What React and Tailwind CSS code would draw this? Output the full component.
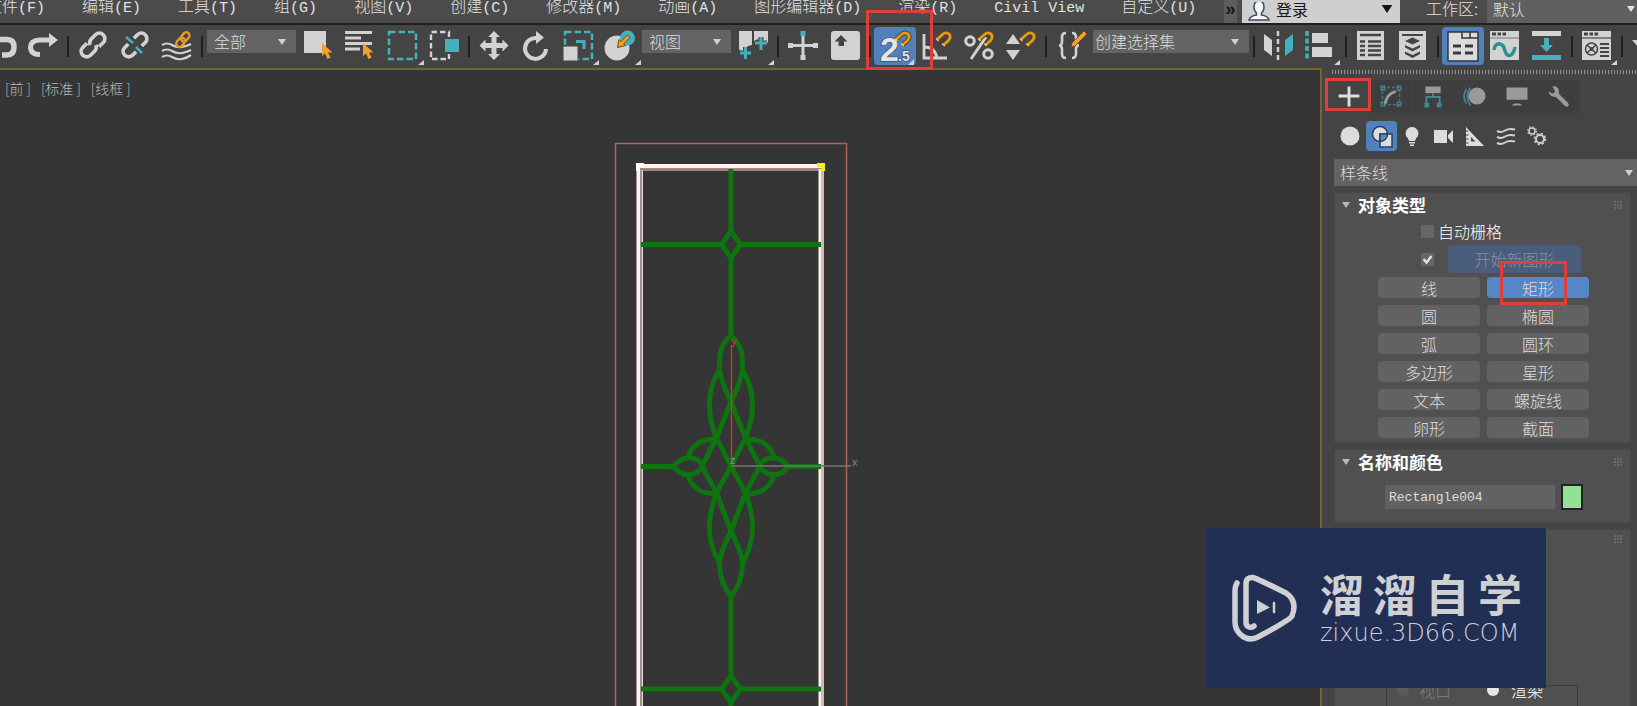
import { clsx } from 'clsx'

const LIGHT = '#d2d2d2'
const TEAL = '#43b0bb'
const ORANGE = '#f2a02a'

const menus = [
  ['文件', '(F)'],
  ['编辑', '(E)'],
  ['工具', '(T)'],
  ['组', '(G)'],
  ['视图', '(V)'],
  ['创建', '(C)'],
  ['修改器', '(M)'],
  ['动画', '(A)'],
  ['图形编辑器', '(D)'],
  ['渲染', '(R)'],
  ['', 'Civil View'],
  ['自定义', '(U)'],
]

const shapes = ['线', '矩形', '圆', '椭圆', '弧', '圆环', '多边形', '星形', '文本', '螺旋线', '卵形', '截面']

const Cursor = ({ x, y }) => (
  <path
    transform={`translate(${x} ${y})`}
    d="M0 0 L0 13 L3 10.5 L5.500 16 L8.500 14.500 L6 9.500 L10.500 9.500 Z"
    fill={ORANGE}
  />
)

const Magnet = ({ x, y }) => (
  <g transform={`translate(${x} ${y})`} fill="none" strokeLinecap="butt">
    <path d="M1 8.500 L6.500 3.500 Q10 0.500 13 3 Q15.500 6 12.500 9.500 L7.500 14" stroke="#5a4520" strokeWidth="4.800" />
    <path d="M1 8.500 L6.500 3.500 Q10 0.500 13 3 Q15.500 6 12.500 9.500 L7.500 14" stroke="#e39a22" strokeWidth="2.800" />
    <path d="M0 7.500 L2.500 10 M6.200 12.500 L8.700 15" stroke="#f7c766" strokeWidth="1.500" />
  </g>
)

// toolbar glyphs, drawn on a 42x38 cell
const glyphs = {
  undo: <path d="M14 12.500 H27 Q34 12.500 34 20 Q34 28 27 28 H22" fill="none" stroke={LIGHT} strokeWidth="5.500" />,
  redo: (
    <g>
      <path d="M29 13 H17 Q8.500 14 8.500 20 Q8.500 27.500 18 27.500" fill="none" stroke={LIGHT} strokeWidth="5" />
      <path d="M27 6 L36 13 L27 20 Z" fill={LIGHT} />
    </g>
  ),
  link: (
    <g transform="rotate(-45 21 18)" fill="none" stroke={LIGHT} strokeWidth="3.600">
      <path d="M18 12.500 H12 a5.500 5.500 0 0 0 0 11 H18 a5.500 5.500 0 0 0 5 -3.500" />
      <path d="M24 23.500 H30 a5.500 5.500 0 0 0 0 -11 H24 a5.500 5.500 0 0 0 -5 3.500" />
    </g>
  ),
  unlink: (
    <g>
      <g transform="rotate(-45 21 18)" fill="none" stroke={LIGHT} strokeWidth="3.600">
        <path d="M17 12.500 H12 a5.500 5.500 0 0 0 0 11 H17" />
        <path d="M25 23.500 H30 a5.500 5.500 0 0 0 0 -11 H25" />
      </g>
      <path d="M12 10 L19 16 M22 20 L28 26" stroke={TEAL} strokeWidth="2.500" />
    </g>
  ),
  bind: (
    <g fill="none">
      <path
        d="M6 18 Q11 15 16 18 T26 20 T35 17 M6 24 Q11 21 16 24 T26 26 T35 23 M6 30 Q11 27 16 30 T26 32 T35 28"
        stroke={LIGHT}
        strokeWidth="2.200"
      />
      <g transform="rotate(-50 27 12)" stroke="#e09a28" strokeWidth="2.400">
        <rect x="18" y="9" width="10" height="6.500" rx="3.200" />
        <rect x="25" y="9" width="10" height="6.500" rx="3.200" />
      </g>
    </g>
  ),
  selectObject: (
    <g>
      <path d="M7 4 H29 V26 H7 Z" fill={LIGHT} />
      <Cursor x={25} y={16} />
    </g>
  ),
  selectName: (
    <g>
      <path d="M6 5.500 H33 M6 11 H22 M6 16.500 H33 M6 22 H21" stroke={LIGHT} strokeWidth="2.800" />
      <Cursor x={24} y={16} />
    </g>
  ),
  region: (
    <g>
      <rect x="8" y="5" width="27" height="27" fill="none" stroke={TEAL} strokeWidth="2.500" strokeDasharray="6.500 3" />
      <path d="M43 33 V38 H37 Z" fill={LIGHT} />
    </g>
  ),
  crossing: (
    <g>
      <path d="M26 10 V5 H8 V32 H26 V27" fill="none" stroke={LIGHT} strokeWidth="2.400" strokeDasharray="5.500 3" />
      <rect x="22" y="12" width="14" height="13" fill={TEAL} />
    </g>
  ),
  move: (
    <path
      d="M21 4 L27 10 H23.500 V16 H29.500 V12.500 L35.500 18.500 L29.500 24.500 V21 H23.500 V27 H27 L21 33 L15 27 H18.500 V21 H12.500 V24.500 L6.500 18.500 L12.500 12.500 V16 H18.500 V10 H15 Z"
      fill={LIGHT}
    />
  ),
  rotate: (
    <g>
      <path d="M22 11 A10.500 10.500 0 1 0 31 22" fill="none" stroke={LIGHT} strokeWidth="4" />
      <path d="M21 4 L29 10.500 L21 17 Z" fill={LIGHT} />
    </g>
  ),
  scale: (
    <g>
      <rect x="8" y="5" width="27" height="27" fill="none" stroke={TEAL} strokeWidth="2.500" strokeDasharray="6.500 3" />
      <path d="M19 14.500 H27 V22" fill="none" stroke={TEAL} strokeWidth="3" />
      <rect x="6" y="19" width="15" height="15" fill={LIGHT} stroke="#444" strokeWidth="1" />
      <path d="M42 33 V38 H36 Z" fill={LIGHT} />
    </g>
  ),
  place: (
    <g>
      <circle cx="18" cy="21" r="12.500" fill={LIGHT} />
      <circle cx="28.500" cy="11" r="7.500" fill={TEAL} />
      <path d="M20 12.500 L18.500 20.500 L26.500 18.500 L24.500 17 L31 10.500 L28.500 8 L22 14.500 Z" fill={ORANGE} stroke="#6b4a18" strokeWidth="1" />
      <path d="M42 33 V38 H36 Z" fill={LIGHT} />
    </g>
  ),
  pivot: (
    <g>
      <path d="M7 4 H20 V18 L16 19 L12 23 V27 L7 22 Z M22 4 H36 V15 L32 19 L26 12 L22 14 Z" fill={LIGHT} />
      <path d="M8 26 H19 M13.500 20 V32 M23 16 H35 M29 10 V23" stroke="#444" strokeWidth="5" />
      <path d="M8 26 H19 M13.500 20 V32 M23 16 H35 M29 10 V23" stroke={TEAL} strokeWidth="3" />
      <path d="M42 33 V38 H36 Z" fill={LIGHT} />
    </g>
  ),
  manipulate: (
    <g fill={LIGHT}>
      <path d="M19.500 9 H22.500 V17 H31 V20 H22.500 V28 H19.500 V20 H11 V17 H19.500 Z" />
      <path d="M6 16 H11 V21 H6 Z M31 16 H36 V21 H31 Z M18.500 28 H23.500 V33 H18.500 Z" />
      <path d="M18.500 4 H23.500 V9 H18.500 Z" fill={TEAL} />
    </g>
  ),
  keyboard: (
    <g>
      <rect x="7" y="4" width="29" height="29" rx="3" fill={LIGHT} />
      <path d="M17 8 L23.500 14.500 H20 V19 H14.500 V14.500 H10.500 Z" fill="#444" />
    </g>
  ),
  snap: (
    <g>
      <text x="6" y="34" fontSize="34" fontWeight="700" fill="#e4e4e4" stroke="#2f3a4c" strokeWidth="1" paintOrder="stroke">
        2
      </text>
      <text x="24" y="34" fontSize="14" fontWeight="700" fill="#e4e4e4" stroke="#2f3a4c" strokeWidth="1" paintOrder="stroke">
        .5
      </text>
      <Magnet x={21} y={4} />
      <path d="M40 32 V38 H34 Z" fill={LIGHT} />
    </g>
  ),
  angle: (
    <g>
      <path d="M8 7 V31 H31 M8 20 Q19 20 21 31" fill="none" stroke={LIGHT} strokeWidth="2.800" />
      <Magnet x={20} y={4} />
    </g>
  ),
  percent: (
    <g>
      <g fill="none" stroke={LIGHT} strokeWidth="3">
        <circle cx="12" cy="14" r="4.300" />
        <circle cx="30" cy="27" r="4.300" />
        <path d="M28 10 L13 32" />
      </g>
      <Magnet x={20} y={4} />
    </g>
  ),
  spinner: (
    <g>
      <path d="M6 17 L13 7 L20 17 Z M6 23 L13 33 L20 23 Z" fill={LIGHT} />
      <Magnet x={20} y={4} />
    </g>
  ),
  braces: (
    <g>
      <path
        d="M16 6 Q12 6 12 10 V15 Q12 18.500 9 18.500 Q12 18.500 12 22 V27 Q12 31 16 31 M22 6 Q26 6 26 10 V15 Q26 18.500 29 18.500 Q26 18.500 26 22 V27 Q26 31 22 31"
        fill="none"
        stroke={LIGHT}
        strokeWidth="2.600"
      />
      <path d="M34 4 L37 7 L25 19 L21 20 L22 16 Z" fill={ORANGE} stroke="#6b4a18" strokeWidth="0.800" />
    </g>
  ),
  mirror: (
    <g>
      <path d="M6 7 L14 13 V29 L6 23 Z" fill={LIGHT} />
      <path d="M20 4 V34" stroke={LIGHT} strokeWidth="2.500" strokeDasharray="5 3" />
      <path d="M35 7 L27 13 V29 L35 23 Z" fill={TEAL} />
    </g>
  ),
  align: (
    <g>
      <path d="M7 4 V33" stroke={TEAL} strokeWidth="3.500" strokeDasharray="5 2.500" />
      <path d="M12 6 H28 V16 H12 Z M12 20 H32 V30 H12 Z" fill={LIGHT} />
      <path d="M40 33 V38 H34 Z" fill={LIGHT} />
    </g>
  ),
  explorer: (
    <g>
      <path d="M7 4 H34 V33 H7 Z" fill={LIGHT} />
      <path
        d="M10 8 H31 M10 14.500 H15 M18 14.500 H31 M10 19 H15 M18 19 H31 M10 23.500 H15 M18 23.500 H31 M10 28 H15 M18 28 H31"
        stroke="#444"
        strokeWidth="2.300"
      />
    </g>
  ),
  layers: (
    <g>
      <path d="M7 4 H34 V33 H7 Z" fill={LIGHT} />
      <path d="M10 8 H31" stroke="#444" strokeWidth="2" />
      <path
        d="M20.500 10.500 L28 14 L20.500 17.500 L13 14 Z M13 18 L20.500 21.500 L28 18 L28 20.500 L20.500 24.500 L13 20.500 Z M13 24.500 L20.500 28 L28 24.500 V27 L20.500 31 L13 27 Z"
        fill="#444"
      />
    </g>
  ),
  ribbon: (
    <g>
      <path d="M6 5 H36 V34 H6 Z" fill="#dcdcdc" stroke="#30353c" strokeWidth="1.500" />
      <path d="M20 5 V11 H36 M28 5 V11" fill="none" stroke="#30353c" strokeWidth="1.500" />
      <path d="M11 19 H19 M11 26 H19 M23 19 H31 M23 26 H31" stroke="#3a3a3a" strokeWidth="3" />
    </g>
  ),
  curve: (
    <g>
      <path d="M6 4 H35 V33 H6 Z" fill={LIGHT} />
      <path d="M8 7 H12 M13.500 7 H17 M18.500 7 H22" stroke="#444" strokeWidth="3" />
      <path d="M6 11 H35" stroke="#777" strokeWidth="1" />
      <path d="M10 23 Q11 16 16 17 Q20 18 21 24 Q23 30 27 28 Q30 26 31 20" fill="none" stroke="#2f8d97" strokeWidth="3.500" />
    </g>
  ),
  schematic: (
    <g>
      <path d="M6 4 H35 V9 H6 Z" fill={LIGHT} />
      <path d="M6 28 H35 V33 H6 Z M18 11 H23 V18 H27 L20.500 25 L14 18 H18 Z" fill={TEAL} />
    </g>
  ),
  material: (
    <g>
      <path d="M6 4 H35 V33 H6 Z" fill={LIGHT} />
      <path d="M8 7 H12 M13.500 7 H17 M18.500 7 H22" stroke="#444" strokeWidth="3" />
      <path d="M6 11 H35" stroke="#666" strokeWidth="1.500" />
      <circle cx="15.500" cy="22" r="6" fill="none" stroke="#444" strokeWidth="1.500" />
      <path d="M11 18 L20 26 M20 18 L11 26" stroke="#444" strokeWidth="1.500" />
      <circle cx="15.500" cy="22" r="2" fill="#444" />
      <path d="M24 17 H33 M24 21 H33 M24 25 H33 M24 29 H33" stroke="#444" strokeWidth="1.800" />
      <path d="M41 33 V38 H35 Z" fill={LIGHT} />
    </g>
  ),
  teapot: <path d="M6 13 L14 13 L14 22 Z" fill={LIGHT} />,
}

const tabs = [
  { name: '创建', icon: <path d="M10 16 H32 M21 6 V27" stroke="#e0e0e0" strokeWidth="3" /> },
  {
    name: '修改',
    icon: (
      <g fill="none">
        <path d="M12 7 H30 V25 H12 Z" stroke="#3d7f85" strokeWidth="1.500" strokeDasharray="3 2" />
        <path d="M10.500 5.500 h4 v4 h-4 Z M27.500 5.500 h4 v4 h-4 Z M10.500 22.500 h4 v4 h-4 Z M27.500 22.500 h4 v4 h-4 Z" stroke="#3d9199" strokeWidth="1.200" />
        <path d="M15 24 Q16 14 26 11" stroke="#9a9a9a" strokeWidth="3" />
      </g>
    ),
  },
  {
    name: '层次',
    icon: (
      <g>
        <path d="M13 6 H29 V13 H13 Z" fill="#9a9a9a" />
        <path d="M21 13 V17 M14 24 V17 H28 V24" fill="none" stroke="#3d8a92" strokeWidth="2" />
        <path d="M12 23 H17 V28 H12 Z M25 23 H30 V28 H25 Z" fill="#3d8a92" />
      </g>
    ),
  },
  {
    name: '运动',
    icon: (
      <g>
        <path d="M12 9 Q7 16 12 24 M16 7 Q10 16 16 26" fill="none" stroke="#3d8a92" strokeWidth="1.800" />
        <circle cx="23" cy="16" r="9" fill="#9a9a9a" />
      </g>
    ),
  },
  {
    name: '显示',
    icon: <path d="M10 7 H32 V20 H10 Z M15 26 Q21 21 27 26 Z" fill="#9a9a9a" />,
  },
  {
    name: '实用程序',
    icon: (
      <g>
        <path d="M18 14 L29 25" stroke="#9a9a9a" strokeWidth="4.500" strokeLinecap="round" />
        <path d="M14 6 Q20 5 21 11 Q21 16 17 17 Q11 17 10 11 L14.500 13.500 L17 11 Z" fill="#9a9a9a" />
      </g>
    ),
  },
]

const categories = [
  { name: '几何体', icon: <circle cx="15" cy="15" r="9.500" fill="#dcdcdc" /> },
  {
    name: '图形',
    icon: (
      <g stroke="#27405f" strokeWidth="1.500">
        <circle cx="14" cy="13" r="7.500" fill="#dcdcdc" />
        <path d="M14 13 H26 V26 H14 Z" fill="#dcdcdc" />
        <path d="M14 20 V13 H21.500 A7.500 7.500 0 0 1 14 20.500 Z" fill="#5b8ac6" />
      </g>
    ),
  },
  {
    name: '灯光',
    icon: (
      <g fill="#dcdcdc">
        <path d="M15 6 A6.500 6.500 0 0 1 19 17.500 L18 20 H12 L11 17.500 A6.500 6.500 0 0 1 15 6 Z" />
        <path d="M12 21 H18 V22.500 H12 Z M13 23.500 H17 V25 H13 Z" />
      </g>
    ),
  },
  { name: '摄影机', icon: <path d="M6 9 H19 V22 H6 Z M20 14 L25 9 V22 L20 17 Z" fill="#dcdcdc" /> },
  {
    name: '辅助对象',
    icon: (
      <g>
        <path d="M7 6 L25 25 H7 Z M12 16 V20.500 H16.500 Z" fill="#dcdcdc" fillRule="evenodd" />
        <path d="M7 10 H9.500 M7 14 H9.500 M7 18 H9.500 M7 22 H9.500" stroke="#444" />
      </g>
    ),
  },
  {
    name: '空间扭曲',
    icon: (
      <path
        d="M7 10 Q11 12 15 9.500 T25 8.500 M7 16 Q11 18 15 15.500 T25 14.500 M7 22 Q11 24 15 21.500 T25 20.500"
        fill="none"
        stroke="#cfcfcf"
        strokeWidth="2"
      />
    ),
  },
  {
    name: '系统',
    icon: (
      <g fill="none" stroke="#cfcfcf">
        <circle cx="11" cy="10" r="3" strokeWidth="1.500" />
        <circle cx="11" cy="10" r="4.300" strokeWidth="1.200" strokeDasharray="1.500 1.900" />
        <circle cx="19" cy="18" r="4" strokeWidth="2" />
        <circle cx="19" cy="18" r="5.500" strokeWidth="1.600" strokeDasharray="2.100 2.220" />
      </g>
    ),
  },
]

function Tool({ name, label, active, children }) {
  return (
    <button
      type="button"
      aria-label={label || name}
      className={clsx('relative h-[38px] w-[42px] shrink-0', active && 'rounded bg-[#5180bd]')}
    >
      <svg viewBox="0 0 42 38" className="h-[38px] w-[42px] overflow-visible font-['Liberation_Sans']">
        {glyphs[name]}
      </svg>
      {children}
    </button>
  )
}

function Sep() {
  return (
    <div className="flex h-[38px] w-2 shrink-0 items-center justify-center">
      <span className="h-[21px] w-0.5 bg-[#1e1e1e]" />
    </div>
  )
}

function Arrow({ className }) {
  return (
    <svg viewBox="0 0 8 6" className={clsx('pointer-events-none', className)}>
      <path d="M0 0 H8 L4 6 Z" fill="currentColor" />
    </svg>
  )
}

function Dropdown({ label, value, className, selectClass, arrowClass = 'right-2.5' }) {
  return (
    <div className={clsx('relative shrink-0 bg-[#636363]', className)}>
      <select aria-label={label} className={clsx('block h-full w-full appearance-none leading-5', selectClass)}>
        <option>{value}</option>
      </select>
      <Arrow className={clsx('absolute top-1/2 h-1.5 w-2 -translate-y-1/2 text-[#d0d0d0]', arrowClass)} />
    </div>
  )
}

function Grip() {
  return (
    <svg viewBox="0 0 8 8" className="h-2 w-2">
      <path d="M0 1 H8 M0 4 H8 M0 7 H8" stroke="#858585" strokeWidth="1" strokeDasharray="2 1" />
    </svg>
  )
}

function Rollout({ title, className, children }) {
  return (
    <section className={clsx('rounded-xs border border-[#484848] bg-[#505050]', className)}>
      <header className={clsx('flex items-center pr-2 pl-[7px]', title ? 'h-6' : 'h-[18px]')}>
        {title && (
          <>
            <Arrow className="mr-2 h-1.5 w-2 text-[#b8b8b8]" />
            <h2 className="text-[17px] leading-6 font-bold text-white">{title}</h2>
          </>
        )}
        <span className="ml-auto">
          <Grip />
        </span>
      </header>
      {children}
    </section>
  )
}

function Mark({ className }) {
  return <span className={clsx('pointer-events-none absolute z-10 border-3 border-[#df3f3b]', className)} />
}

function MenuBar() {
  return (
    <div className="flex h-[25px] border-b-2 border-[#1f1f1f] bg-[#4b4b4b] text-base text-[#e2e2e2]">
      <nav className="flex min-w-0 flex-1 items-start gap-[37px] overflow-hidden">
        {menus.map(([name, key], i) => (
          <button
            key={name + key}
            type="button"
            className={clsx('-mt-[3px] shrink-0 leading-4 whitespace-pre', i === 0 && '-ml-[14px]')}
          >
            {name}
            <span className="font-['Liberation_Mono'] text-[15px] leading-4">{key}</span>
          </button>
        ))}
      </nav>
      <button type="button" className="w-[13px] bg-[#5c5c5c] font-['Liberation_Sans'] text-lg leading-4 font-bold text-[#151515]">
        <span className="block -mt-1.5">»</span>
      </button>
      <button type="button" className="ml-[5px] flex w-[158px] items-center bg-[#cfcfcf] pr-1.5 pl-1.5 text-[#151515]">
        <svg viewBox="0 0 22 20" className="mr-1.5 h-5 w-[22px]">
          <path
            d="M11 -1 Q16 -1 16 5 Q16 9 13.500 11 V13 Q20 14 21 18 H1 Q2 14 8.500 13 V11 Q6 9 6 5 Q6 -1 11 -1 Z"
            fill="#f4f6fa"
            stroke="#3d4c66"
            strokeWidth="1.500"
          />
        </svg>
        <span className="-mt-1.5 leading-5 font-normal">登录</span>
        <Arrow className="-mt-1.5 ml-auto h-2 w-3.5" />
      </button>
      <label htmlFor="workspace" className="w-[87px] pl-[26px] leading-4">
        工作区:
      </label>
      <div className="relative w-[150px] bg-[#606060]">
        <select id="workspace" className="block h-full w-full appearance-none pb-1.5 pl-1.5 leading-4">
          <option>默认</option>
        </select>
        <Arrow className="absolute top-1.5 right-0.5 h-1.5 w-2" />
      </div>
    </div>
  )
}

function Toolbar() {
  return (
    <div className="flex h-[43px] items-start bg-[#444444] pt-0.5 text-base text-[#dedede]">
      <div className="-ml-5 flex">
        <Tool name="undo" />
        <Tool name="redo" />
      </div>
      <Sep />
      <Tool name="link" />
      <Tool name="unlink" />
      <Tool name="bind" />
      <Sep />
      <Dropdown label="选择过滤器" value="全部" className="mx-px mt-[3px] h-[23px] w-[89px]" selectClass="pb-0.5 pl-[7px]" />
      <Tool name="selectObject" />
      <Tool name="selectName" />
      <Tool name="region" />
      <Tool name="crossing" />
      <Sep />
      <Tool name="move" />
      <Tool name="rotate" />
      <Tool name="scale" />
      <Tool name="place" />
      <Dropdown label="参考坐标系" value="视图" className="mx-px mt-[3px] h-[23px] w-[89px]" selectClass="pb-0.5 pl-[7px]" />
      <Tool name="pivot" />
      <Sep />
      <Tool name="manipulate" />
      <Tool name="keyboard" />
      <Sep />
      <Tool name="snap" active>
        <Mark className="-top-[17px] -left-2 h-[60px] w-[67px]" />
      </Tool>
      <Tool name="angle" />
      <Tool name="percent" />
      <Tool name="spinner" />
      <Sep />
      <Tool name="braces" />
      <Dropdown label="命名选择集" value="创建选择集" className="mx-px mt-[3px] h-[23px] w-[156px]" selectClass="pb-0.5 pl-0.5" />
      <Sep />
      <Tool name="mirror" />
      <Tool name="align" />
      <Sep />
      <Tool name="explorer" />
      <Tool name="layers" />
      <Sep />
      <Tool name="ribbon" active />
      <Tool name="curve" />
      <Tool name="schematic" />
      <Sep />
      <Tool name="material" />
      <Sep />
      <Tool name="teapot" />
    </div>
  )
}

// one half of the lattice ornament; the other half is its mirror image
function OrnamentHalf() {
  return (
    <g>
      <path d="M731 336 C721 343 719 354 719.500 370 C721 382 727 393 731 402 L745.500 438 L760 466 L745.500 493 L731 531 C727 540 721 550 719.500 562 C719 578 724 588 731 597" />
      <path d="M719.500 370 C707 390 706 412 716.500 438 L731 466 L745.500 493 C756 520 755 542 742.500 563" />
      <path d="M716.500 439 C702 439 692 444 688 457 M688 475 C691 487 701 494 716.500 494" />
      <path d="M674 466.500 C683 454 697 456 703 466 C697 476 683 479 674 466.500 Z" />
    </g>
  )
}

function Scene() {
  return (
    <svg viewBox="600 70 270 636" className="absolute top-0 left-[600px] h-[636px] w-[270px]">
      <path d="M615.500 720 V143.500 H846.500 V720" fill="none" stroke="#b2625a" strokeWidth="1.500" />
      <path d="M638.500 720 V166 H820.500 V720" fill="none" stroke="#fff4f2" strokeWidth="4" />
      <path d="M641.500 720 V168.500 H822.500" fill="none" stroke="#b98780" strokeWidth="1" />
      <path d="M642.500 720 V170 H820" fill="none" stroke="#ecd8d4" strokeWidth="1" />
      <path d="M822.500 720 V170" stroke="#d2b8b0" strokeWidth="3" />
      <path d="M636 163 H644 V167 H640 V171 H636 Z" fill="#fff" />
      <path d="M817 163 H825 V171 H822 V167 H817 Z" fill="#f5ee1c" />
      <g fill="none" stroke="#0d7410" strokeWidth="5">
        <path d="M731 169 V230 M731 258 V337 M731 596 V675 M731 702 V720" />
        <path d="M641 244.500 H722 M740 244.500 H821 M641 466.500 H675 M787 466.500 H821 M641 689 H722 M740 689 H821" />
        <path d="M731 231 L740.500 244.500 L731 258 L721.500 244.500 Z M731 675.500 L740.500 689 L731 702.500 L721.500 689 Z" />
        <OrnamentHalf />
        <g transform="matrix(-1 0 0 1 1462 0)">
          <OrnamentHalf />
        </g>
      </g>
      <path d="M731.500 345 V462" stroke="#b5402c" strokeWidth="1.500" />
      <path d="M731 466 H851" stroke="#747474" strokeWidth="1.500" />
      <g className="font-['Liberation_Sans'] text-[11px]">
        <text x="731" y="345" fill="#cf3a1a">
          y
        </text>
        <text x="730" y="464" fill="#8a8a8a">
          z
        </text>
        <text x="852" y="466" fill="#808080">
          x
        </text>
      </g>
    </svg>
  )
}

function Viewport() {
  return (
    <main className="relative min-w-0 flex-1 overflow-hidden border-t-2 border-r-2 border-[#75642f] bg-[#353535]">
      <div className="flex gap-2.5 pt-2 pl-[5px] text-sm leading-5 text-[#b9b9b9]">
        <button type="button">[前 ]</button>
        <button type="button">[标准 ]</button>
        <button type="button">[线框 ]</button>
      </div>
      <Scene />
    </main>
  )
}

function CommandPanel() {
  return (
    <aside className="flex w-[315px] shrink-0 flex-col overflow-hidden bg-[#444444] pl-1.5">
      <div className="mt-0.5 ml-[3px] h-1 shrink-0 bg-[radial-gradient(#909090_1px,transparent_1px)] bg-size-[3px_2px]" />
      <div role="tablist" className="mt-1.5 flex shrink-0">
        {tabs.map((tab, i) => (
          <button
            key={tab.name}
            type="button"
            role="tab"
            aria-label={tab.name}
            aria-selected={i === 0}
            className={clsx('relative h-[33px] w-[42px]', i > 0 && 'border-x border-[#404040] bg-[#3e3e3e]')}
          >
            <svg viewBox="0 0 42 33" className="mx-auto h-[33px] w-10">
              {tab.icon}
            </svg>
            {i === 0 && <Mark className="-top-0.5 -left-[3px] h-[33px] w-[46px]" />}
          </button>
        ))}
      </div>
      <div className="mt-2 ml-[7px] flex shrink-0">
        {categories.map((item) => (
          <button
            key={item.name}
            type="button"
            aria-label={item.name}
            className={clsx('h-[30px] w-[31px]', item.name === '图形' && 'rounded-sm bg-[#5180bd]')}
          >
            <svg viewBox="0 0 31 30" className="h-[30px] w-[31px]">
              {item.icon}
            </svg>
          </button>
        ))}
      </div>
      <Dropdown
        label="图形类别"
        value="样条线"
        className="mt-2 ml-1.5 h-[27px] text-base text-[#dedede]"
        selectClass="pb-0.5 pl-1.5"
        arrowClass="right-1"
      />
      <div className="mt-1.5 mr-1.5 ml-1.5 flex flex-1 flex-col gap-1.5 text-base">
        <Rollout title="对象类型" className="pb-1">
          <div className="ml-[86px] flex h-7 items-center gap-1 text-white">
            <input id="autogrid" type="checkbox" className="h-[13px] w-[13px] appearance-none bg-[#666666]" />
            <label htmlFor="autogrid">自动栅格</label>
          </div>
          <div className="ml-[86px] flex h-7 items-center gap-3.5">
            <span className="relative flex">
              <input
                type="checkbox"
                defaultChecked
                aria-label="开始新图形"
                className="h-[13px] w-[13px] appearance-none bg-[#666666]"
              />
              <svg viewBox="0 0 13 13" className="pointer-events-none absolute inset-0 h-[13px] w-[13px]">
                <path d="M2.500 6 L5.500 9.500 L10.500 3" fill="none" stroke="#e4e4e4" strokeWidth="2.400" />
              </svg>
            </span>
            <button type="button" disabled className="h-7 w-[133px] rounded-sm bg-[#4a5d7b] text-[#8592a6]">
              开始新图形
            </button>
          </div>
          <div className="mt-1 ml-[43px] grid w-[211px] grid-cols-2 gap-[7px]">
            {shapes.map((shape) => (
              <button
                key={shape}
                type="button"
                className={clsx(
                  'relative h-[21px] rounded leading-5 text-[#dedede]',
                  shape === '矩形' ? 'bg-[#5686c8]' : 'bg-[#626262]',
                )}
              >
                {shape}
                {shape === '矩形' && <Mark className="-top-4 left-[13px] h-11 w-[67px]" />}
              </button>
            ))}
          </div>
        </Rollout>
        <Rollout title="名称和颜色" className="pb-3">
          <div className="mt-2.5 ml-[50px] flex items-center gap-1.5">
            <input
              aria-label="名称"
              defaultValue="Rectangle004"
              className="h-6 w-[170px] bg-[#626262] px-1 font-['Liberation_Mono'] text-[13px] text-[#dedede]"
            />
            <button type="button" aria-label="颜色" className="h-[26px] w-[22px] border-2 border-[#222222] bg-[#93e294]" />
          </div>
        </Rollout>
        <Rollout className="flex-1">
          <fieldset className="mt-[137px] ml-[51px] flex h-10 w-[192px] items-start border border-[#3c3c3c] pl-2.5">
            <label className="-mt-2 flex items-center gap-2.5 bg-[#505050] text-[#7f7f7f]">
              <input type="radio" name="target" disabled className="h-3 w-3 appearance-none rounded-full bg-[#5a5a5a]" />
              视口
            </label>
            <label className="-mt-2 ml-9 flex items-center gap-3 bg-[#505050] text-white">
              <input type="radio" name="target" defaultChecked className="h-3 w-3 appearance-none rounded-full bg-[#e8e8e8]" />
              渲染
            </label>
          </fieldset>
        </Rollout>
      </div>
    </aside>
  )
}

function Watermark() {
  return (
    <div className="absolute top-[528px] right-[91px] flex h-40 w-[340px] items-center bg-[#222f55] pl-[26px] text-[#cfd0d4]">
      <svg viewBox="0 0 66 68" className="h-[68px] w-[66px]" fill="none" stroke="currentColor" strokeLinecap="round">
        <path
          d="M22 52 Q20 54 17 53 Q14 52 14 48 V10 Q14 3 21 3.500 Q24 4 54 19 Q66 27 60 42 Q58 46 26 63 Q16 68 8 60 Q3 55 3 48 V18 Q3 12 5 9"
          strokeWidth="5.500"
          strokeLinejoin="round"
        />
        <path d="M25 26 L38 33.500 L25 40 Z" fill="currentColor" stroke="none" />
        <path d="M42 29 V38" strokeWidth="2.500" />
      </svg>
      <div className="-mt-1.5 ml-[22px]">
        <p className="flex w-[202px] justify-between text-[44px] leading-[56px] font-bold">
          {[...'溜溜自学'].map((char, i) => (
            <span key={i}>{char}</span>
          ))}
        </p>
        <p className="font-['DejaVu_Sans'] text-2xl leading-6 font-extralight">zixue.3D66.COM</p>
      </div>
    </div>
  )
}

export default function App() {
  return (
    <div className="relative flex h-screen flex-col overflow-hidden bg-[#444444] font-['Noto_Sans_CJK_SC',sans-serif] font-light">
      <MenuBar />
      <Toolbar />
      <div className="flex min-h-0 flex-1">
        <Viewport />
        <CommandPanel />
      </div>
      <Watermark />
    </div>
  )
}
